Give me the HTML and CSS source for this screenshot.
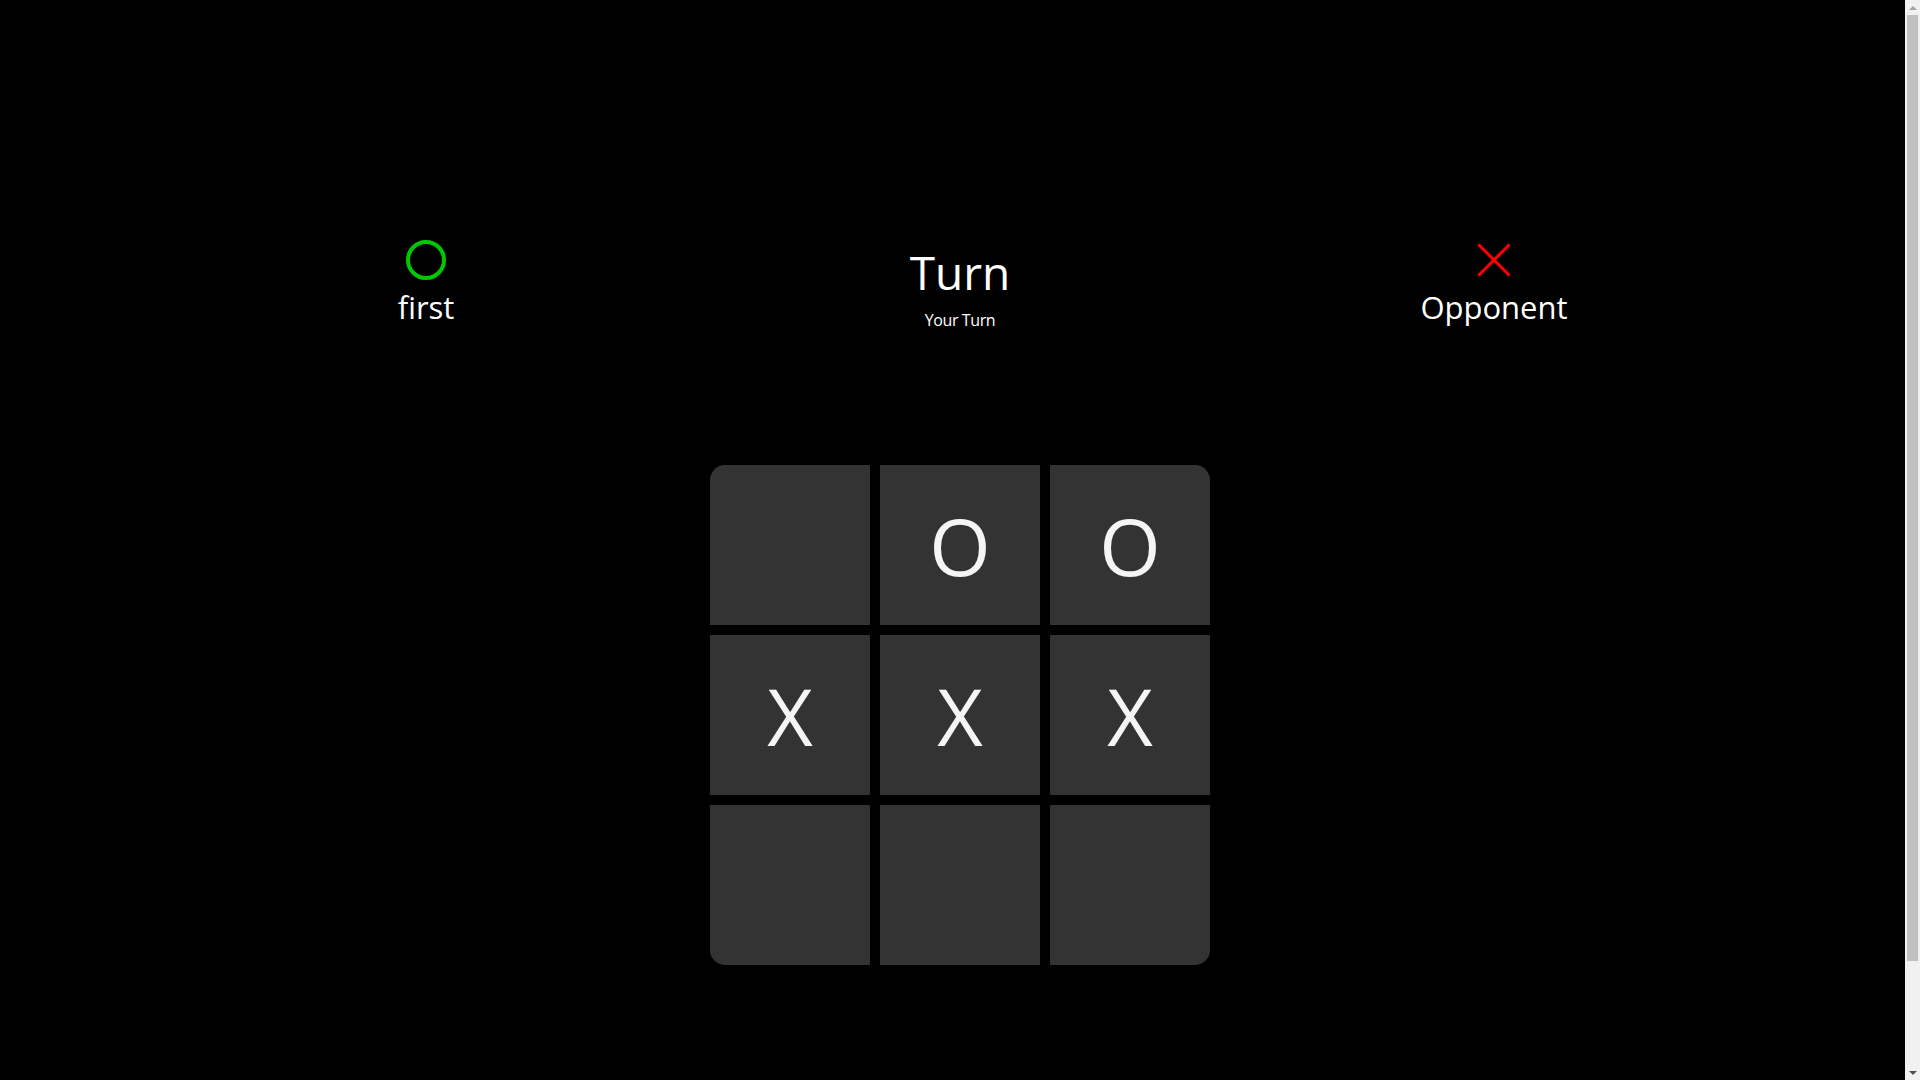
FILE: index.html
```html
<!DOCTYPE html>
<html lang="en">
<head>
<meta charset="utf-8">
<title>Tic Tac Toe</title>
<link rel="stylesheet" href="styles.css">
</head>
<body>
<div class="page">
  <header class="header">
    <div class="player">
      <svg class="icon" width="40" height="40" viewBox="0 0 40 40" aria-hidden="true">
        <circle cx="20" cy="20" r="18" fill="none" stroke="#00c800" stroke-width="4"/>
      </svg>
      <div class="name">first</div>
    </div>
    <div class="status">
      <div class="title">Turn</div>
      <div class="subtitle">Your Turn</div>
    </div>
    <div class="player">
      <svg class="icon" width="40" height="40" viewBox="0 0 40 40" aria-hidden="true">
        <path d="M4.5 4.5 L35.5 35.5 M35.5 4.5 L4.5 35.5" stroke="#ff0000" stroke-width="3" fill="none"/>
      </svg>
      <div class="name">Opponent</div>
    </div>
  </header>
  <main class="board">
    <div class="cell"></div>
    <div class="cell">O</div>
    <div class="cell">O</div>
    <div class="cell">X</div>
    <div class="cell">X</div>
    <div class="cell">X</div>
    <div class="cell"></div>
    <div class="cell"></div>
    <div class="cell"></div>
  </main>
</div>
<div class="scrollbar" aria-hidden="true">
  <div class="arrow arrow-up"></div>
  <div class="thumb"></div>
  <div class="arrow arrow-down"></div>
</div>
</body>
</html>
```
FILE: styles.css
```css
html {
  overflow-x: hidden;
}
body {
  margin: 0;
  background: #000;
  color: #fff;
  font-family: "Open Sans", "Noto Sans", sans-serif;
}
.page {
  width: 100vw;
  min-height: 1200px;
  padding-top: 240px;
  box-sizing: border-box;
}
.header {
  display: grid;
  grid-template-columns: repeat(3, 534px);
  justify-content: center;
  align-items: start;
}
.player {
  display: flex;
  flex-direction: column;
  align-items: center;
}
.icon {
  display: block;
}
.name {
  margin-top: 7px;
  font-size: 31px;
  line-height: 40px;
}
.status {
  display: flex;
  flex-direction: column;
  align-items: center;
}
.title {
  font-size: 46px;
  line-height: 64px;
}
.subtitle {
  margin-top: 5px;
  font-size: 16px;
  line-height: 22px;
  letter-spacing: -0.4px;
}
.board {
  margin: 134px auto 0;
  width: 500px;
  display: grid;
  grid-template-columns: repeat(3, 160px);
  grid-auto-rows: 160px;
  gap: 10px;
  border-radius: 15px;
  overflow: hidden;
}
.cell {
  background: #333333;
  color: #f5f5f5;
  font-size: 79px;
  display: flex;
  align-items: center;
  justify-content: center;
}

/* drawn window scrollbar overlay */
.scrollbar {
  position: fixed;
  top: 0;
  right: 0;
  width: 15px;
  height: 100vh;
  background: #f1f1f1;
  display: flex;
  flex-direction: column;
  align-items: center;
}
.arrow {
  height: 15px;
  width: 15px;
  display: flex;
  align-items: center;
  justify-content: center;
  flex: none;
}
.arrow::before {
  content: "";
  width: 0;
  height: 0;
  border-left: 4px solid transparent;
  border-right: 4px solid transparent;
}
.arrow-up::before {
  border-bottom: 4px solid #a3a3a3;
}
.arrow-down {
  margin-top: auto;
}
.arrow-down::before {
  border-top: 4px solid #505050;
}
.thumb {
  width: 11px;
  height: 946px;
  background: #c1c1c1;
  flex: none;
}
```
